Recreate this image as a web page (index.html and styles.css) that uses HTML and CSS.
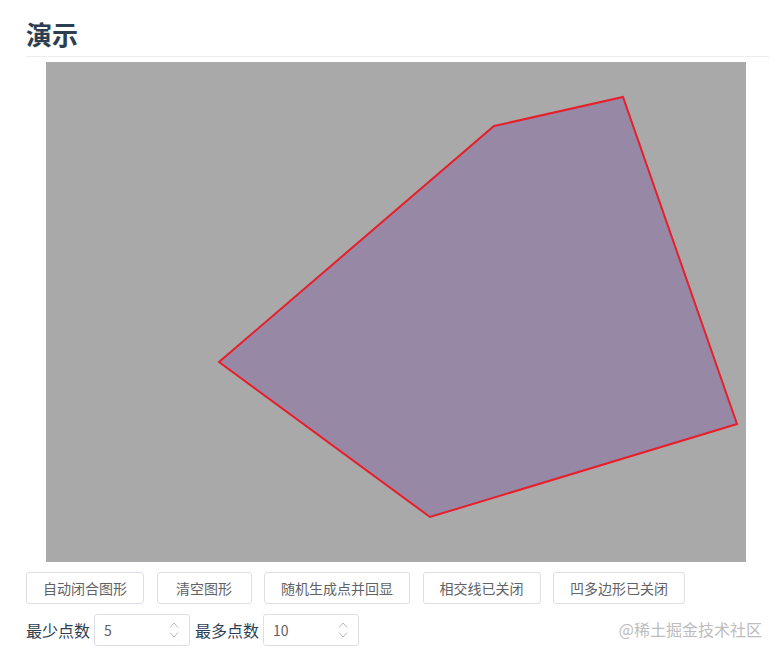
FILE: index.html
```html
<!DOCTYPE html>
<html lang="zh-CN">
<head>
<meta charset="utf-8">
<title>演示</title>
<link rel="stylesheet" href="styles.css">
</head>
<body>
<div class="page">
  <h2 class="title">演示</h2>
  <div class="stage">
    <svg class="stage-svg" width="700" height="500" viewBox="0 0 700 500">
      <polygon points="448,64 577,35 691,362 384,455 173,300" fill="#9788a6" stroke="#e81e2a" stroke-width="2" stroke-linejoin="miter"/>
    </svg>
  </div>
  <div class="buttons">
    <button class="btn">自动闭合图形</button>
    <button class="btn">清空图形</button>
    <button class="btn">随机生成点并回显</button>
    <button class="btn">相交线已关闭</button>
    <button class="btn">凹多边形已关闭</button>
  </div>
  <div class="inputs">
    <span class="label">最少点数</span>
    <div class="num">
      <span class="num-value">5</span>
      <span class="spin">
        <svg width="10" height="6" viewBox="0 0 10 6"><path d="M1 5.5 L5 1 L9 5.5" fill="none" stroke="#b4b8bf" stroke-width="1"/></svg>
        <svg width="10" height="6" viewBox="0 0 10 6"><path d="M1 0.5 L5 5 L9 0.5" fill="none" stroke="#b4b8bf" stroke-width="1"/></svg>
      </span>
    </div>
    <span class="label">最多点数</span>
    <div class="num">
      <span class="num-value">10</span>
      <span class="spin">
        <svg width="10" height="6" viewBox="0 0 10 6"><path d="M1 5.5 L5 1 L9 5.5" fill="none" stroke="#b4b8bf" stroke-width="1"/></svg>
        <svg width="10" height="6" viewBox="0 0 10 6"><path d="M1 0.5 L5 5 L9 0.5" fill="none" stroke="#b4b8bf" stroke-width="1"/></svg>
      </span>
    </div>
  </div>
  <div class="watermark">@稀土掘金技术社区</div>
</div>
</body>
</html>
```
FILE: styles.css
```css
html, body {
  margin: 0;
  padding: 0;
  background: #fff;
}
body {
  font-family: "Noto Sans CJK SC", "Noto Sans", sans-serif;
  color: #2c3e50;
}
.page {
  position: relative;
  height: 658px;
  box-sizing: border-box;
  padding: 18px 12px 0 26px;
}
.title {
  margin: 0;
  font-size: 26px;
  line-height: 32px;
  font-weight: 700;
  padding-bottom: 6px;
  border-bottom: 1px solid #eaecef;
  color: #2c3e50;
}
.stage {
  margin: 5px 0 0 20px;
  width: 700px;
  height: 500px;
  background: #a9a9a9;
}
.stage-svg {
  display: block;
}
.buttons {
  margin-top: 10px;
  display: flex;
  gap: 12.5px;
}
.btn {
  height: 32px;
  min-width: 95px;
  padding: 0 16px;
  box-sizing: border-box;
  border: 1px solid #dcdfe6;
  border-radius: 3px;
  background: #fff;
  color: #606266;
  font-family: "Noto Sans CJK SC", sans-serif;
  font-size: 14px;
  line-height: 30px;
  cursor: pointer;
}
.inputs {
  margin-top: 10px;
  display: flex;
  align-items: center;
  height: 32px;
}
.label {
  font-size: 16px;
  color: #2c3e50;
  margin-right: 4px;
}
.num {
  width: 96px;
  height: 32px;
  box-sizing: border-box;
  border: 1px solid #dcdfe6;
  border-radius: 3px;
  display: flex;
  align-items: center;
  justify-content: space-between;
  padding: 0 10px 0 9px;
  margin-right: 5px;
}
.num-value {
  font-size: 14px;
  color: #606266;
}
.spin {
  display: flex;
  flex-direction: column;
  gap: 4px;
}
.spin svg {
  display: block;
}
.watermark {
  position: absolute;
  right: 19px;
  top: 618px;
  font-size: 16px;
  line-height: 22px;
  color: #bdbdbd;
}
```
